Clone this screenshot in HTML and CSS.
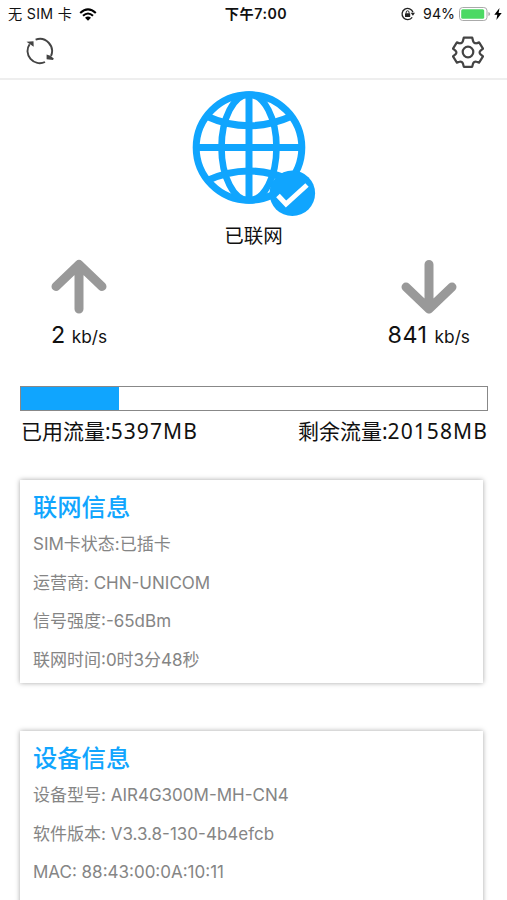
FILE: index.html
```
<!DOCTYPE html>
<html lang="zh-CN">
<head>
    <meta charset="UTF-8">
    <meta name="viewport" content="width=device-width, initial-scale=1.0">
    <title>已联网</title>
    <link rel="stylesheet" href="styles.css">
</head>
<body>

    <div class="status-bar">
        <div class="status-left">
            <span class="carrier">无 SIM 卡</span>
            <svg class="wifi" width="18" height="13" viewBox="0 0 18 13">
                <path d="M1.2 5Q9 -2.2 16.8 5M4 7.8Q9 3.2 14 7.8" fill="none" stroke="#000" stroke-width="2.1"/>
                <path d="M6 9.8Q9 7.2 12 9.8L9 12.7z"/>
            </svg>
        </div>
        <div class="clock">下午7:00</div>
        <div class="status-right">
            <svg class="lock" width="14" height="14" viewBox="0 0 14 14">
                <path d="M11.2 10.3A5.6 5.6 0 1 1 12 5.3" fill="none" stroke="#222" stroke-width="1.3"/>
                <path d="M9.6 5.8h4.4l-2.1 3z" fill="#222"/>
                <rect x="4" y="6.2" width="5.2" height="3.9" rx=".5" fill="#222"/>
                <path d="M5.2 6.4V5.2a1.4 1.4 0 0 1 2.8 0v1.2" fill="none" stroke="#222"/>
            </svg>
            <span class="percent">94%</span>
            <svg class="battery" width="32" height="14" viewBox="0 0 32 14">
                <rect x=".5" y=".5" width="27.5" height="13" rx="3.2" fill="#fff" stroke="#aaa"/>
                <rect x="2.2" y="2.2" width="23" height="9.6" rx="1.5" fill="#4cd964"/>
                <path d="M29.4 5v4q1.8-.6 1.8-2t-1.8-2z" fill="#aaa"/>
            </svg>
            <svg class="bolt" width="8" height="12" viewBox="0 0 8 12">
                <path d="M5.5 0L.3 6.7h3L2.4 12 7.7 5H4.6z"/>
            </svg>
        </div>
    </div>

    <div class="toolbar">
        <svg class="refresh" width="28" height="28" viewBox="0 0 28 28">
            <path d="M9.6 2.7A12.2 12.2 0 0 1 25 19M19 25A12.2 12.2 0 0 1 3.6 7.2" fill="none" stroke="#444" stroke-width="1.9"/>
            <path d="M.5 4.8l7-.6.2 5.6-3.3-2.4zM20.6 17.5l3.7 1.3 3.5 2.8-.8 1.4-6.400-.8z" fill="#444"/>
        </svg>
        <svg class="gear" width="32" height="32" viewBox="0 0 32 32" fill="none" stroke="#444" stroke-width="2.2" stroke-linejoin="round">
            <path d="M11.8 1.6h8.4l1 3.8q.4 1.2 1.7 1.7 1.1.5 2.3 0l1.9-.7 3.9 6.3-2.4 1.9q-1 .9-1 1.9t1 1.9l2.4 1.9-3.9 6.3-2.6-.8q-1.2-.4-2.2.2t-1.3 1.8l-.8 3h-8.4l-.8-3q-.3-1.2-1.3-1.8t-2.2-.2l-2.6.8L1 20.3l2.4-1.9q1-.9 1-1.9t-1-1.9L1 12.7l3.9-6.3 1.9.7q1.2.5 2.3 0 1.3-.5 1.7-1.7z"/>
            <circle cx="16" cy="16" r="5.3"/>
        </svg>
    </div>

    <div class="network">
        <svg class="globe" width="128" height="130" viewBox="0 0 128 130">
            <g fill="none" stroke="#10a5fe">
                <circle cx="59" cy="59.5" r="52.8" stroke-width="7"/>
                <ellipse cx="59" cy="59.5" rx="27.5" ry="53" stroke-width="6.6"/>
                <path d="M59 7v105M7 59.5h104" stroke-width="7"/>
                <path d="M16 28Q59 47.5 102 28M16 93Q59 73 102 93" stroke-width="7"/>
            </g>
            <circle cx="102.3" cy="105.3" r="22.8" fill="#10a5fe"/>
            <path d="M88 107.5l8 8.5 21-19" fill="none" stroke="#fff" stroke-width="5"/>
        </svg>
        <div class="state">已联网</div>
    </div>

    <div class="speeds">
        <div class="speed">
            <svg width="58" height="58" viewBox="0 0 58 58">
                <path d="M29 51V6.5M6 28.5L29 6.5l23 22" fill="none" stroke="#999" stroke-width="9" stroke-linecap="round" stroke-linejoin="round"/>
            </svg>
            <div class="rate">2 <small>kb/s</small></div>
        </div>
        <div class="speed">
            <svg width="58" height="58" viewBox="0 0 58 58">
                <path d="M29 6.5V51M6 29l23 22 23-22" fill="none" stroke="#999" stroke-width="9" stroke-linecap="round" stroke-linejoin="round"/>
            </svg>
            <div class="rate">841 <small>kb/s</small></div>
        </div>
    </div>

    <div class="usage">
        <div class="bar"><div class="used" style="width: 21.1%"></div></div>
        <div class="usage-text">
            <span>已用流量:<b>5397MB</b></span>
            <span>剩余流量:<b>20158MB</b></span>
        </div>
    </div>

    <div class="card">
        <h2>联网信息</h2>
        <p>SIM卡状态:已插卡</p>
        <p>运营商: CHN-UNICOM</p>
        <p>信号强度:-65dBm</p>
        <p>联网时间:0时3分48秒</p>
    </div>

    <div class="card">
        <h2>设备信息</h2>
        <p>设备型号: AIR4G300M-MH-CN4</p>
        <p>软件版本: V3.3.8-130-4b4efcb</p>
        <p>MAC: 88:43:00:0A:10:11</p>
    </div>

</body>
</html>
```
FILE: styles.css
```
* { box-sizing: border-box; }
body {
    margin: 0;
    height: 900px;
    overflow: hidden;
    background: #fff;
    color: #111;
    font-family: Inter, "Noto Sans CJK SC", sans-serif;
}
svg { display: block; flex: none; }
.status-bar {
    display: grid;
    grid-template-columns: 1fr auto 1fr;
    height: 28px;
    padding: 0 5px 0 8px;
    align-items: center;
    font-size: 14.2px;
    line-height: 20px;
}
.status-left, .status-right {
    display: flex;
    align-items: center;
}
.status-right { justify-content: flex-end; }
.carrier { letter-spacing: 0.3px; }
.wifi { margin-left: 7px; }
.clock {
    padding-left: 2px;
    font-weight: 600;
    letter-spacing: 0.5px;
}
.percent { margin: 0 4px 0 8px; }
.bolt { margin-left: 3px; }
.toolbar {
    display: flex;
    justify-content: space-between;
    height: 52px;
    padding: 8px 23px 0 26px;
    border-bottom: 2px solid #eee;
}
.refresh { margin-top: 1px; }
.network {
    display: flex;
    flex-direction: column;
    align-items: center;
    padding-top: 8px;
}
.state {
    padding-top: 1px;
    font-size: 19.5px;
    line-height: 34px;
}
.speeds {
    display: flex;
    justify-content: space-between;
    padding: 5px 37px 0 50px;
}
.speed {
    display: flex;
    flex-direction: column;
    align-items: center;
}
.rate {
    padding-top: 1px;
    font-size: 23.3px;
    line-height: 36px;
}
.speed + .speed .rate { letter-spacing: 0.5px; }
.rate small {
    font-size: 17.3px;
    letter-spacing: 0;
}
.usage { padding: 31px 19px 0 20px; }
.bar {
    height: 25px;
    border: 1px solid #888;
}
.used {
    height: 100%;
    background: #10a5fe;
}
.usage-text {
    display: flex;
    justify-content: space-between;
    padding-left: 1px;
    font-family: "Noto Sans", "Noto Sans CJK SC", sans-serif;
    font-size: 21px;
    line-height: 41px;
}
.usage-text b {
    font-weight: 400;
    letter-spacing: 1.1px;
}
.card {
    height: 203px;
    margin: 28px 24px 0 20px;
    padding: 9px 13px;
    box-shadow: 0 0 5px rgba(0, 0, 0, 0.35);
    color: #858585;
}
.card + .card { margin-top: 48px; }
.card h2 {
    margin: 0;
    color: #10a5fe;
    font-size: 24.3px;
    font-weight: 500;
    line-height: 36px;
}
.card p {
    margin: 0;
    font-size: 17px;
    line-height: 38.6px;
}
```
